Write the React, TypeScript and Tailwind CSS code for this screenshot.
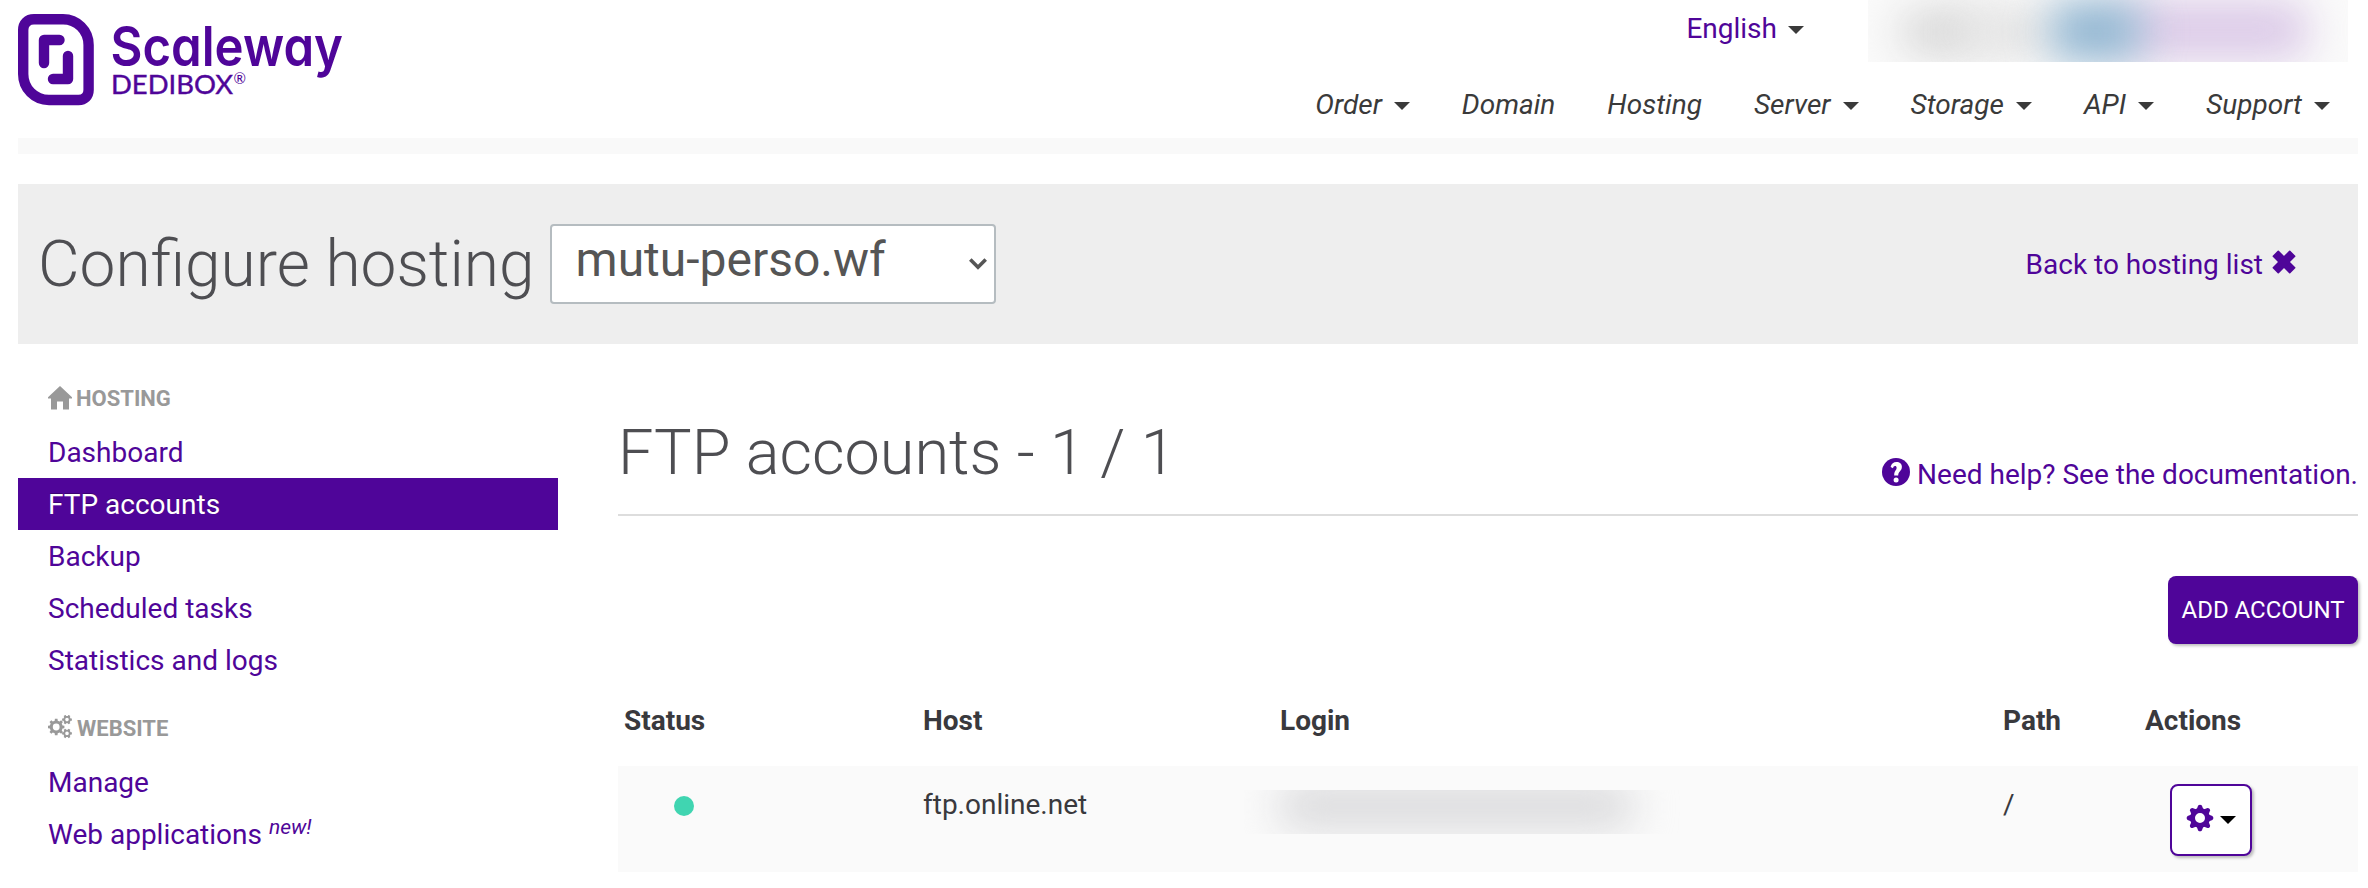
import React from "react";

const Caret = ({ className = "" }: { className?: string }) => (
  <svg viewBox="0 0 16 8" className={`h-2 w-4 shrink-0 ${className}`} fill="currentColor">
    <path d="M0 0h16L8 8z" />
  </svg>
);

const gearPath = (cx: number, cy: number, outer: number, inner: number, hole: number, teeth: number) => {
  const step = (Math.PI * 2) / teeth;
  const pts: string[] = [];
  const at = (r: number, a: number) =>
    `${(cx + r * Math.cos(a)).toFixed(2)} ${(cy + r * Math.sin(a)).toFixed(2)}`;
  for (let i = 0; i < teeth; i++) {
    const a = i * step;
    pts.push(at(inner, a - step * 0.3), at(outer, a - step * 0.2), at(outer, a + step * 0.2), at(inner, a + step * 0.3));
  }
  return `M${pts.join("L")}ZM${cx - hole} ${cy}a${hole} ${hole} 0 1 0 ${hole * 2} 0a${hole} ${hole} 0 1 0 ${-hole * 2} 0Z`;
};

const CogsIcon = () => (
  <svg viewBox="0 0 24 24" className="h-6 w-6 shrink-0" fill="currentColor" fillRule="evenodd">
    <path d={gearPath(8.2, 12, 8.3, 6.5, 3.4, 8)} />
    <path d={gearPath(19, 4.6, 5, 3.8, 1.8, 6)} />
    <path d={gearPath(19, 18.4, 5, 3.8, 1.8, 6)} />
  </svg>
);

const HomeIcon = () => (
  <svg viewBox="0 0 24 24" className="h-6 w-6 shrink-0" fill="currentColor">
    <path d="M12 0 24 11.200V12.500h-3V23.400h-6v-7.800H9v7.800H3V12.500H0v-1.300z" />
  </svg>
);

const CogIcon = () => (
  <svg viewBox="-14 -14 28 28" className="h-7 w-7 shrink-0 text-[#4f0599]" stroke="currentColor" fill="none">
    <circle r="7.5" strokeWidth="5" />
    {[0, 45, 90, 135, 180, 225, 270, 315].map((a) => (
      <path key={a} d="M-3.4-8.5-1.9-12.4Q0-14.3 1.900-12.4L3.400-8.5Z" fill="currentColor" stroke="none" transform={`rotate(${a})`} />
    ))}
  </svg>
);

const CrossIcon = () => (
  <svg viewBox="-12 -12 24 24" className="h-6 w-6 shrink-0" fill="currentColor">
    <rect x="-12.4" y="-4.3" width="24.8" height="8.6" rx=".8" transform="rotate(45)" />
    <rect x="-12.4" y="-4.3" width="24.8" height="8.6" rx=".8" transform="rotate(-45)" />
  </svg>
);

const HelpIcon = () => (
  <svg viewBox="0 0 28 28" className="h-7 w-7 shrink-0">
    <circle cx="14" cy="14" r="14" fill="currentColor" />
    <path
      d="M8.6 8.9C9.4 5.6 11.6 4 14.5 4c3.2 0 5.4 1.9 5.4 4.8 0 4.500-3.700 4.500-3.700 8.700h-4c0-4.800 2.400-5 2.400-7.700 0-1.200-.6-1.800-1.500-1.800-1.200 0-1.700.8-2.100 2.200z"
      fill="#fff"
    />
    <circle cx="14.1" cy="21.900" r="2.500" fill="#fff" />
  </svg>
);

const Logo = () => (
  <svg viewBox="0 0 330 92" className="mt-[14px] h-[92px] w-[330px] shrink-0 overflow-visible" fill="#4f0599">
    <g fill="none" stroke="#4f0599" strokeWidth="10.4">
      <path d="M16 5.200H45C59 5.200 70.600 16.500 70.600 31V76C70.600 82 66.500 86 60.500 86H31C16.500 86 5.200 74.500 5.200 60V16C5.200 9.500 9.500 5.200 16 5.200Z" />
      <path strokeLinecap="round" strokeLinejoin="round" d="M41.500 26H26V49" />
      <path strokeLinecap="round" strokeLinejoin="round" d="M50 42V65H35" />
    </g>
    <text
      x="92.500"
      y="52"
      fontSize="55"
      fontWeight="600"
      textLength="232.500"
      lengthAdjust="spacingAndGlyphs"
      className="font-['Inter',sans-serif] [font-feature-settings:'cv11']"
    >
      Scaleway
    </text>
    <text x="93" y="80" fontSize="26.500" textLength="122" lengthAdjust="spacingAndGlyphs" className="font-['Lato',sans-serif]" stroke="#4f0599" strokeWidth=".4">
      DEDIBOX
    </text>
    <text x="215.500" y="70" fontSize="15" className="font-['Lato',sans-serif]">®</text>
  </svg>
);

const nav = [
  { label: "Order", menu: true },
  { label: "Domain", menu: false },
  { label: "Hosting", menu: false },
  { label: "Server", menu: true },
  { label: "Storage", menu: true },
  { label: "API", menu: true },
  { label: "Support", menu: true },
];

const SideLink = ({ children, active = false }: { children: React.ReactNode; active?: boolean }) => (
  <a
    className={
      active
        ? "block h-[52px] bg-[#4f0599] pl-[30px] leading-[54px] text-white [text-shadow:0_-1px_0_rgba(0,0,0,0.25)]"
        : "block h-[52px] pl-[30px] leading-[54px] text-[#4f0599]"
    }
  >
    {children}
  </a>
);

export default function App() {
  return (
    <div className="h-[888px] w-[2368px] overflow-hidden bg-white pr-[10px] pl-[18px] font-['Roboto',sans-serif] text-[28px] text-[#3a3a3a]">
      <header className="flex h-[138px] justify-between">
        <Logo />
        <div className="flex flex-col items-end">
          <div className="flex h-[62px] pr-[10px]">
            <a className="flex h-[57px] items-center gap-[11px] pr-16 text-[#4f0599]">
              English <Caret className="mt-[3px] text-[#3a3a3a]" />
            </a>
            <div className="relative h-[62px] w-[480px] overflow-hidden bg-[#fafafa]">
              <i className="absolute top-[8px] left-[30px] h-12 w-[90px] rounded-[24px] bg-[#d9d9d9] blur-[20px]" />
              <i className="absolute top-[8px] left-[100px] h-12 w-[90px] rounded-[24px] bg-[#e3e3e3] blur-[20px]" />
              <i className="absolute top-0 left-[250px] h-[60px] w-[190px] rounded-[20px] bg-[#dccbe8] blur-[20px]" />
              <i className="absolute top-0 left-[182px] h-[62px] w-[92px] rounded-[20px] bg-[#93b7d2] blur-[20px]" />
            </div>
          </div>
          <nav className="flex gap-[52px] pt-[22px] pr-7 leading-[41px] italic">
            {nav.map((n) => (
              <a key={n.label} className="flex items-center gap-3">
                {n.label}
                {n.menu && <Caret className="mt-[3px]" />}
              </a>
            ))}
          </nav>
        </div>
      </header>

      <div className="h-4 bg-[#f9f9f9]" />

      <section className="mt-[30px] flex h-40 items-center bg-[#eee] pr-[62px] pl-5">
        <h1 className="pt-[2px] text-[64px] leading-[80px] font-light text-[#4e4e52]">Configure hosting</h1>
        <div className="ml-[15px] flex h-20 w-[446px] items-center justify-between rounded border-2 border-[#b5bcc0] bg-white pr-[7px] pl-6 text-[#555]">
          <span className="pb-2 text-[48px] leading-[68px]">mutu-perso.wf</span>
          <svg viewBox="0 0 18 12" className="h-3 w-[18px]" fill="none" stroke="currentColor" strokeWidth="3.600">
            <path d="M1.300 1.600 9 9.300l7.700-7.700" />
          </svg>
        </div>
        <a className="ml-auto flex items-center gap-[9px] text-[#4f0599]">
          <span className="pt-[2px]">Back to hosting list</span>
          <span className="pb-1">
            <CrossIcon />
          </span>
        </a>
      </section>

      <div className="flex gap-[60px]">
        <aside className="w-[540px] shrink-0 pt-[34px]">
          <h2 className="flex h-[39px] items-center gap-1 pl-[30px] text-[22px] font-bold text-[#999]">
            <HomeIcon />
            <span className="pt-px">HOSTING</span>
          </h2>
          <div className="pt-[9px]">
            <SideLink>Dashboard</SideLink>
            <SideLink active>FTP accounts</SideLink>
            <SideLink>Backup</SideLink>
            <SideLink>Scheduled tasks</SideLink>
            <SideLink>Statistics and logs</SideLink>
          </div>
          <h2 className="mt-[23px] flex h-[39px] items-center gap-[5px] pl-[30px] text-[22px] font-bold text-[#999]">
            <span className="pb-[3px]">
              <CogsIcon />
            </span>
            <span>WEBSITE</span>
          </h2>
          <div className="pt-2">
            <SideLink>Manage</SideLink>
            <SideLink>
              Web applications <em className="relative -top-[10px] text-[21px]">new!</em>
            </SideLink>
          </div>
        </aside>

        <main className="flex-1">
          <div className="flex h-[172px] justify-between border-b-2 border-[#ddd]">
            <h1 className="pt-[69px] text-[63px] leading-[80px] font-light text-[#4e4e52]">FTP accounts - 1 / 1</h1>
            <a className="mt-[104px] flex h-[52px] items-center gap-[7px] text-[#4f0599]">
              <span className="pb-1">
                <HelpIcon />
              </span>
              <span className="pt-[2px]">Need help? See the documentation.</span>
            </a>
          </div>
          <div className="flex justify-end pt-[60px]">
            <button className="h-[68px] w-[190px] rounded-lg bg-[#4f0599] text-[24px] whitespace-nowrap text-white shadow-[2px_2px_3px_rgba(0,0,0,0.25)]">
              ADD ACCOUNT
            </button>
          </div>
          <div className="grid h-[122px] grid-cols-[299px_357px_723px_142px_1fr] items-center pt-[31px] pl-[6px] font-bold text-[#39393d]">
            <span>Status</span>
            <span>Host</span>
            <span>Login</span>
            <span>Path</span>
            <span>Actions</span>
          </div>
          <div className="grid h-[106px] grid-cols-[299px_357px_723px_142px_1fr] bg-[#fafafa] pl-[6px] leading-[78px] text-[#39393d]">
            <span className="flex pt-[30px] pl-[50px]">
              <i className="h-5 w-5 rounded-full bg-[#40d5b1]" />
            </span>
            <span>ftp.online.net</span>
            <span className="-ml-9 pt-6">
              <i className="relative block h-11 w-[450px] overflow-hidden bg-[#fafafa]">
                <i className="absolute top-[-8px] left-[34px] h-12 w-[356px] rounded-[20px] bg-[#dbdbdd] blur-[20px]" />
              </i>
            </span>
            <span>/</span>
            <span className="pt-[18px] pl-[25px]">
              <button className="flex h-[72px] w-[82px] items-center gap-[6px] rounded-lg border-2 border-[#4f0599] bg-white pb-1 pl-[14px] shadow-[2px_2px_3px_rgba(0,0,0,0.25)]">
                <CogIcon />
                <Caret className="mt-1 text-black" />
              </button>
            </span>
          </div>
        </main>
      </div>
    </div>
  );
}
